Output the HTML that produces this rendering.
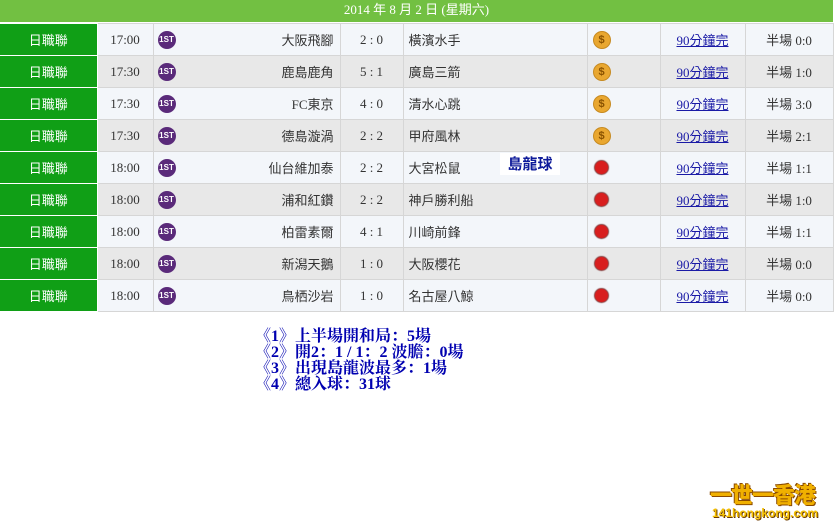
<!DOCTYPE html>
<html><head><meta charset="utf-8"><style>
body{margin:0;width:835px;height:527px;background:#fff;position:relative;overflow:hidden;font-family:"Liberation Serif","Noto Sans CJK TC",serif;}
.hdr{position:absolute;left:0;top:0;width:833px;height:22px;background:#72c042;color:#fff;font-size:13px;text-align:center;line-height:20px;}
table{position:absolute;left:0;top:23px;border-collapse:collapse;width:833px;table-layout:fixed;}
td{height:31px;padding:0;border:1px solid #d6d6d6;border-left:none;font-size:13px;color:#333;font-family:"Liberation Serif","Noto Sans CJK TC",serif;white-space:nowrap;vertical-align:middle;position:relative}
tr:nth-child(odd) td{background:#f3f6fa}
tr:nth-child(even) td{background:#e8e8e8}
td.lg{background:#109f16!important;color:#fff;text-align:center;border-color:#fff;}
.c{text-align:center}.r{text-align:right;padding-right:6px}.l{padding-left:5px}
.st{position:absolute;left:4px;top:7px;width:18px;height:18px;border-radius:50%;background:#5a2a7a;color:#fff;font:bold 8px "Liberation Sans",sans-serif;line-height:18px;text-align:center}
.d{position:absolute;left:5px;top:7px;width:16px;height:16px;border-radius:50%;background:#e9a730;border:1px solid #c78a20;color:#8a5200;font:bold 11px "Liberation Sans",sans-serif;line-height:16px;text-align:center}
.rd{position:absolute;left:7px;top:9px;width:13px;height:13px;border-radius:50%;background:#d81e1e;box-shadow:0 0 1px 1px #8a3a3a}
a{color:#1a1aa6;text-decoration:underline}
.note{position:absolute;left:255px;top:329px;color:#0000b0;font:bold 16px/16px "Liberation Serif","Noto Serif CJK SC",serif;}
.wl{position:absolute;left:500px;top:153px;width:60px;height:22px;background:#fff;color:#0d1a9a;font:bold 15px "Noto Sans CJK TC",sans-serif;text-align:center;line-height:22px}
.logo{position:absolute;left:710px;top:478px;color:#f0b000;font:900 22px "Noto Sans CJK TC",sans-serif;text-shadow:1px 1px 0 #8a4a00,-1px -1px 0 #8a4a00;letter-spacing:-1px}
.logo2{position:absolute;left:712px;top:506px;color:#f5c000;font:bold 12px "Liberation Sans",sans-serif;text-shadow:1px 1px 0 #6a3a00}
</style></head><body>
<div class="hdr">2014 年 8 月 2 日 (星期六)</div>
<table>
<colgroup><col style="width:97px"><col style="width:56px"><col style="width:187px"><col style="width:63px"><col style="width:184px"><col style="width:73px"><col style="width:85px"><col style="width:88px"></colgroup>
<tr><td class="lg">日職聯</td><td class="c">17:00</td><td class="r"><span class="st">1ST</span>大阪飛腳</td><td class="c">2 : 0</td><td class="l">橫濱水手</td><td><span class="d">$</span></td><td class="c"><a>90分鐘完</a></td><td class="c">半場 0:0</td></tr>
<tr><td class="lg">日職聯</td><td class="c">17:30</td><td class="r"><span class="st">1ST</span>鹿島鹿角</td><td class="c">5 : 1</td><td class="l">廣島三箭</td><td><span class="d">$</span></td><td class="c"><a>90分鐘完</a></td><td class="c">半場 1:0</td></tr>
<tr><td class="lg">日職聯</td><td class="c">17:30</td><td class="r"><span class="st">1ST</span>FC東京</td><td class="c">4 : 0</td><td class="l">清水心跳</td><td><span class="d">$</span></td><td class="c"><a>90分鐘完</a></td><td class="c">半場 3:0</td></tr>
<tr><td class="lg">日職聯</td><td class="c">17:30</td><td class="r"><span class="st">1ST</span>德島漩渦</td><td class="c">2 : 2</td><td class="l">甲府風林</td><td><span class="d">$</span></td><td class="c"><a>90分鐘完</a></td><td class="c">半場 2:1</td></tr>
<tr><td class="lg">日職聯</td><td class="c">18:00</td><td class="r"><span class="st">1ST</span>仙台維加泰</td><td class="c">2 : 2</td><td class="l">大宮松鼠</td><td><span class="rd"></span></td><td class="c"><a>90分鐘完</a></td><td class="c">半場 1:1</td></tr>
<tr><td class="lg">日職聯</td><td class="c">18:00</td><td class="r"><span class="st">1ST</span>浦和紅鑽</td><td class="c">2 : 2</td><td class="l">神戶勝利船</td><td><span class="rd"></span></td><td class="c"><a>90分鐘完</a></td><td class="c">半場 1:0</td></tr>
<tr><td class="lg">日職聯</td><td class="c">18:00</td><td class="r"><span class="st">1ST</span>柏雷素爾</td><td class="c">4 : 1</td><td class="l">川崎前鋒</td><td><span class="rd"></span></td><td class="c"><a>90分鐘完</a></td><td class="c">半場 1:1</td></tr>
<tr><td class="lg">日職聯</td><td class="c">18:00</td><td class="r"><span class="st">1ST</span>新潟天鵝</td><td class="c">1 : 0</td><td class="l">大阪櫻花</td><td><span class="rd"></span></td><td class="c"><a>90分鐘完</a></td><td class="c">半場 0:0</td></tr>
<tr><td class="lg">日職聯</td><td class="c">18:00</td><td class="r"><span class="st">1ST</span>鳥栖沙岩</td><td class="c">1 : 0</td><td class="l">名古屋八鯨</td><td><span class="rd"></span></td><td class="c"><a>90分鐘完</a></td><td class="c">半場 0:0</td></tr>
</table>
<div class="wl">島龍球</div>
<div class="note">《1》上半場開和局：5場<br>《2》開2：1 / 1：2 波膽：0場<br>《3》出現島龍波最多：1場<br>《4》總入球：31球</div>
<div class="logo">一世一香港</div>
<div class="logo2">141hongkong.com</div>
</body></html>
